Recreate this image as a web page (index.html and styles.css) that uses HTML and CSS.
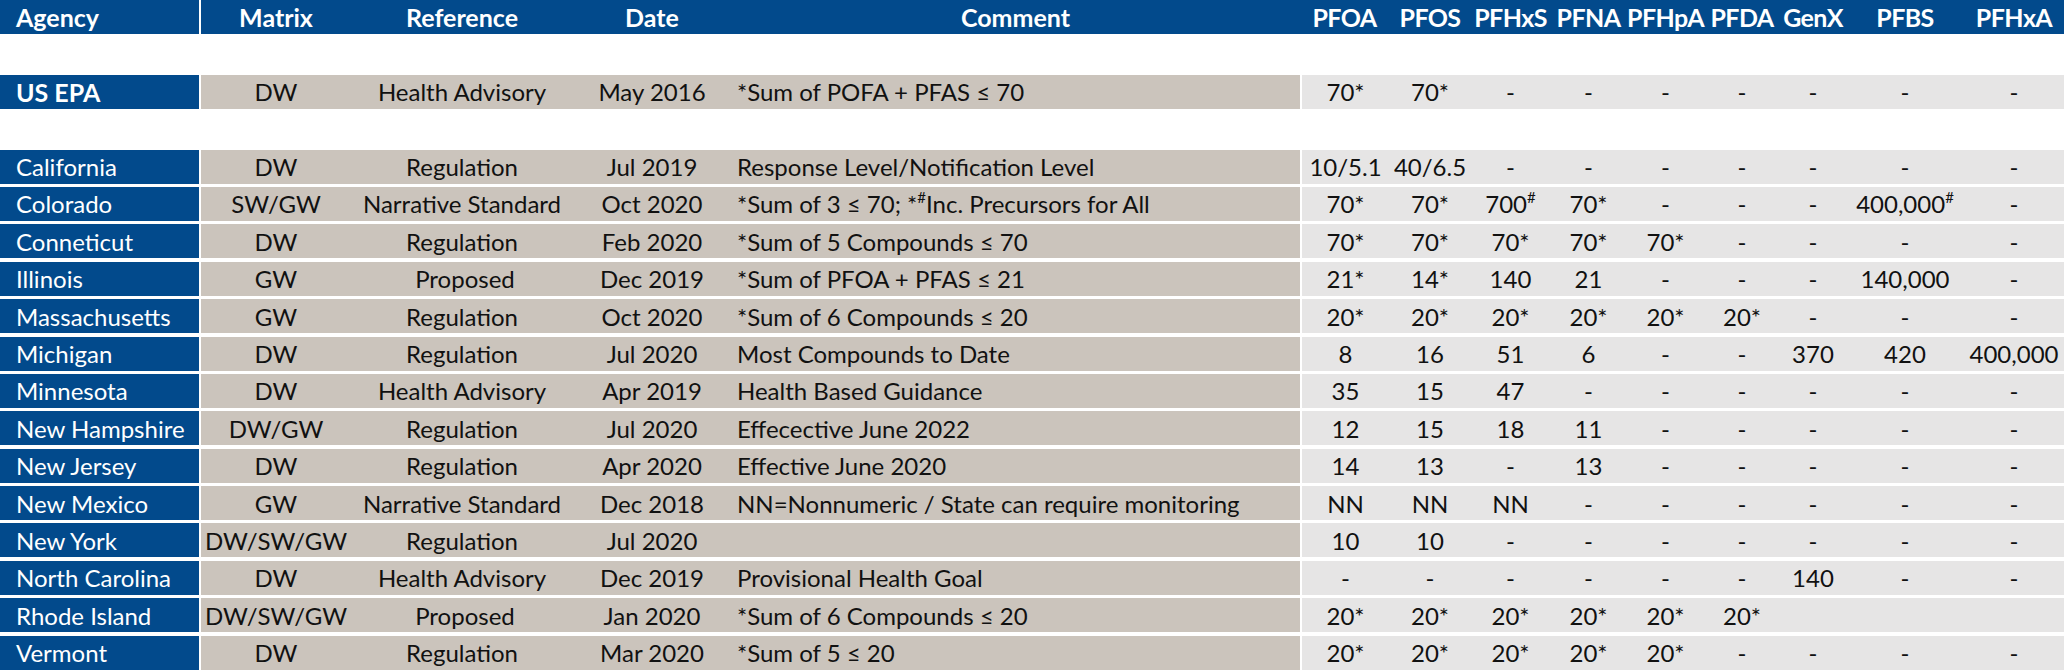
FILE: index.html
```html
<!DOCTYPE html>
<html lang="en">
<head>
<meta charset="utf-8">
<title>PFAS Regulations</title>
<link rel="stylesheet" href="styles.css">
</head>
<body>
<div class="table">
  <div class="row head">
    <div class="c agency">Agency</div>
    <div class="c ctr">Matrix</div>
    <div class="c ctr">Reference</div>
    <div class="c ctr">Date</div>
    <div class="c ctr">Comment</div>
    <div class="c ctr tight">PFOA</div>
    <div class="c ctr tight">PFOS</div>
    <div class="c ctr tight">PFHxS</div>
    <div class="c ctr tight">PFNA</div>
    <div class="c ctr tight">PFHpA</div>
    <div class="c ctr tight">PFDA</div>
    <div class="c ctr tight">GenX</div>
    <div class="c ctr tight">PFBS</div>
    <div class="c ctr tight">PFHxA</div>
  </div>
  <div class="blank"></div>
  <div class="row data">
    <div class="c agency bold">US EPA</div>
    <div class="c tan ctr">DW</div>
    <div class="c tan ctr">Health Advisory</div>
    <div class="c tan ctr">May 2016</div>
    <div class="c tan cmt">*Sum of POFA + PFAS ≤ 70</div>
    <div class="c num first">70*</div><div class="c num">70*</div><div class="c num">-</div><div class="c num">-</div><div class="c num">-</div><div class="c num">-</div><div class="c num">-</div><div class="c num">-</div><div class="c num">-</div>
  </div>
  <div class="blank"></div>
  <div class="row data">
    <div class="c agency">California</div>
    <div class="c tan ctr">DW</div>
    <div class="c tan ctr">Regulation</div>
    <div class="c tan ctr">Jul 2019</div>
    <div class="c tan cmt">Response Level/Notification Level</div>
    <div class="c num first">10/5.1</div><div class="c num">40/6.5</div><div class="c num">-</div><div class="c num">-</div><div class="c num">-</div><div class="c num">-</div><div class="c num">-</div><div class="c num">-</div><div class="c num">-</div>
  </div>
  <div class="row data">
    <div class="c agency">Colorado</div>
    <div class="c tan ctr">SW/GW</div>
    <div class="c tan ctr">Narrative Standard</div>
    <div class="c tan ctr">Oct 2020</div>
    <div class="c tan cmt">*Sum of 3 ≤ 70; *<sup class="sup">#</sup>Inc. Precursors for All</div>
    <div class="c num first">70*</div><div class="c num">70*</div><div class="c num">700<sup class="sup">#</sup></div><div class="c num">70*</div><div class="c num">-</div><div class="c num">-</div><div class="c num">-</div><div class="c num">400,000<sup class="sup">#</sup></div><div class="c num">-</div>
  </div>
  <div class="row data">
    <div class="c agency">Conneticut</div>
    <div class="c tan ctr">DW</div>
    <div class="c tan ctr">Regulation</div>
    <div class="c tan ctr">Feb 2020</div>
    <div class="c tan cmt">*Sum of 5 Compounds ≤ 70</div>
    <div class="c num first">70*</div><div class="c num">70*</div><div class="c num">70*</div><div class="c num">70*</div><div class="c num">70*</div><div class="c num">-</div><div class="c num">-</div><div class="c num">-</div><div class="c num">-</div>
  </div>
  <div class="row data">
    <div class="c agency">Illinois</div>
    <div class="c tan ctr">GW</div>
    <div class="c tan ctr prop">Proposed</div>
    <div class="c tan ctr">Dec 2019</div>
    <div class="c tan cmt">*Sum of PFOA + PFAS ≤ 21</div>
    <div class="c num first">21*</div><div class="c num">14*</div><div class="c num">140</div><div class="c num">21</div><div class="c num">-</div><div class="c num">-</div><div class="c num">-</div><div class="c num">140,000</div><div class="c num">-</div>
  </div>
  <div class="row data">
    <div class="c agency">Massachusetts</div>
    <div class="c tan ctr">GW</div>
    <div class="c tan ctr">Regulation</div>
    <div class="c tan ctr">Oct 2020</div>
    <div class="c tan cmt">*Sum of 6 Compounds ≤ 20</div>
    <div class="c num first">20*</div><div class="c num">20*</div><div class="c num">20*</div><div class="c num">20*</div><div class="c num">20*</div><div class="c num">20*</div><div class="c num">-</div><div class="c num">-</div><div class="c num">-</div>
  </div>
  <div class="row data">
    <div class="c agency">Michigan</div>
    <div class="c tan ctr">DW</div>
    <div class="c tan ctr">Regulation</div>
    <div class="c tan ctr">Jul 2020</div>
    <div class="c tan cmt">Most Compounds to Date</div>
    <div class="c num first">8</div><div class="c num">16</div><div class="c num">51</div><div class="c num">6</div><div class="c num">-</div><div class="c num">-</div><div class="c num">370</div><div class="c num">420</div><div class="c num">400,000</div>
  </div>
  <div class="row data">
    <div class="c agency">Minnesota</div>
    <div class="c tan ctr">DW</div>
    <div class="c tan ctr">Health Advisory</div>
    <div class="c tan ctr">Apr 2019</div>
    <div class="c tan cmt">Health Based Guidance</div>
    <div class="c num first">35</div><div class="c num">15</div><div class="c num">47</div><div class="c num">-</div><div class="c num">-</div><div class="c num">-</div><div class="c num">-</div><div class="c num">-</div><div class="c num">-</div>
  </div>
  <div class="row data">
    <div class="c agency">New Hampshire</div>
    <div class="c tan ctr">DW/GW</div>
    <div class="c tan ctr">Regulation</div>
    <div class="c tan ctr">Jul 2020</div>
    <div class="c tan cmt">Effecective June 2022</div>
    <div class="c num first">12</div><div class="c num">15</div><div class="c num">18</div><div class="c num">11</div><div class="c num">-</div><div class="c num">-</div><div class="c num">-</div><div class="c num">-</div><div class="c num">-</div>
  </div>
  <div class="row data">
    <div class="c agency">New Jersey</div>
    <div class="c tan ctr">DW</div>
    <div class="c tan ctr">Regulation</div>
    <div class="c tan ctr">Apr 2020</div>
    <div class="c tan cmt">Effective June 2020</div>
    <div class="c num first">14</div><div class="c num">13</div><div class="c num">-</div><div class="c num">13</div><div class="c num">-</div><div class="c num">-</div><div class="c num">-</div><div class="c num">-</div><div class="c num">-</div>
  </div>
  <div class="row data">
    <div class="c agency">New Mexico</div>
    <div class="c tan ctr">GW</div>
    <div class="c tan ctr">Narrative Standard</div>
    <div class="c tan ctr">Dec 2018</div>
    <div class="c tan cmt">NN=Nonnumeric / State can require monitoring</div>
    <div class="c num first">NN</div><div class="c num">NN</div><div class="c num">NN</div><div class="c num">-</div><div class="c num">-</div><div class="c num">-</div><div class="c num">-</div><div class="c num">-</div><div class="c num">-</div>
  </div>
  <div class="row data">
    <div class="c agency">New York</div>
    <div class="c tan ctr">DW/SW/GW</div>
    <div class="c tan ctr">Regulation</div>
    <div class="c tan ctr">Jul 2020</div>
    <div class="c tan cmt"></div>
    <div class="c num first">10</div><div class="c num">10</div><div class="c num">-</div><div class="c num">-</div><div class="c num">-</div><div class="c num">-</div><div class="c num">-</div><div class="c num">-</div><div class="c num">-</div>
  </div>
  <div class="row data">
    <div class="c agency">North Carolina</div>
    <div class="c tan ctr">DW</div>
    <div class="c tan ctr">Health Advisory</div>
    <div class="c tan ctr">Dec 2019</div>
    <div class="c tan cmt">Provisional Health Goal</div>
    <div class="c num first">-</div><div class="c num">-</div><div class="c num">-</div><div class="c num">-</div><div class="c num">-</div><div class="c num">-</div><div class="c num">140</div><div class="c num">-</div><div class="c num">-</div>
  </div>
  <div class="row data">
    <div class="c agency">Rhode Island</div>
    <div class="c tan ctr">DW/SW/GW</div>
    <div class="c tan ctr prop">Proposed</div>
    <div class="c tan ctr">Jan 2020</div>
    <div class="c tan cmt">*Sum of 6 Compounds ≤ 20</div>
    <div class="c num first">20*</div><div class="c num">20*</div><div class="c num">20*</div><div class="c num">20*</div><div class="c num">20*</div><div class="c num">20*</div><div class="c num"></div><div class="c num"></div><div class="c num"></div>
  </div>
  <div class="row data">
    <div class="c agency">Vermont</div>
    <div class="c tan ctr">DW</div>
    <div class="c tan ctr">Regulation</div>
    <div class="c tan ctr">Mar 2020</div>
    <div class="c tan cmt">*Sum of 5 ≤ 20</div>
    <div class="c num first">20*</div><div class="c num">20*</div><div class="c num">20*</div><div class="c num">20*</div><div class="c num">20*</div><div class="c num">-</div><div class="c num">-</div><div class="c num">-</div><div class="c num">-</div>
  </div>
</div>
</body>
</html>
```
FILE: styles.css
```css
html, body {
  margin: 0;
  padding: 0;
  background: #ffffff;
}
body {
  font-family: "Lato", "Liberation Sans", sans-serif;
  color: #111111;
  width: 2064px;
  height: 670px;
  overflow: hidden;
}
.table {
  display: flex;
  flex-direction: column;
  gap: 3.4px;
}
.row {
  display: grid;
  grid-template-columns: 201px 150px 222px 158px 569px 89px 82px 79px 77px 77px 76px 66px 118px 100px;
  height: 34px;
}
.blank {
  height: 34px;
}
.c {
  display: flex;
  align-items: center;
  white-space: nowrap;
  box-sizing: border-box;
  height: 34px;
  overflow: visible;
}
.ctr {
  justify-content: center;
}
.head {
  background: #024a8c;
  color: #ffffff;
  font-weight: 700;
  font-size: 25px;
}
.head .agency {
  border-right: 2px solid #ffffff;
}
.tight {
  letter-spacing: -0.6px;
}
.data {
  font-size: 24px;
}
.agency {
  background: #024a8c;
  color: #ffffff;
  padding-left: 16px;
  border-right: 2px solid #ffffff;
}
.bold {
  font-weight: 700;
  font-size: 25px;
}
.tan {
  background: #cbc4bc;
}
.cmt {
  padding-left: 6px;
}
.prop {
  padding-left: 6px;
}
.num {
  background: #e6e5e5;
  justify-content: center;
}
.first {
  border-left: 2px solid #ffffff;
}
.sup {
  font-size: 15px;
  align-self: flex-start;
  margin-top: 3px;
  line-height: 1;
}
```
